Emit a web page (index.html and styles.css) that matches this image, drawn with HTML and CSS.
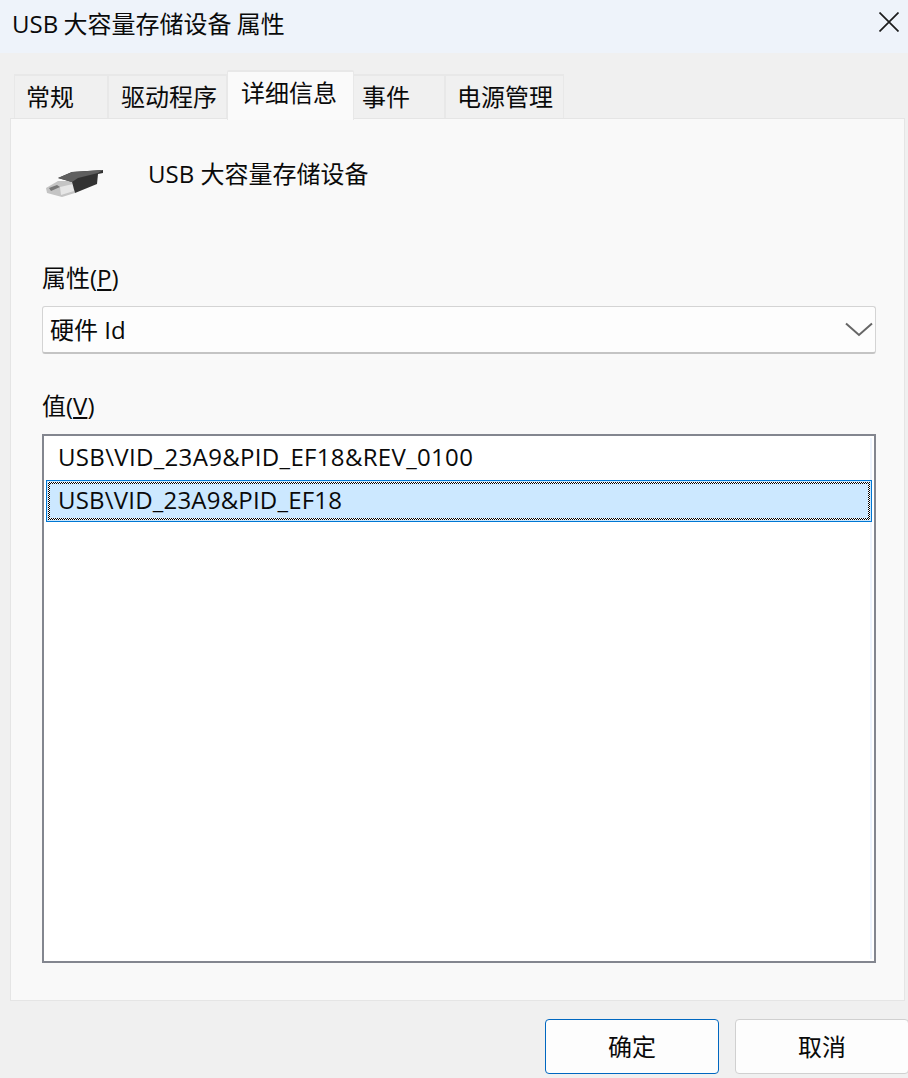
FILE: index.html
```html
<!DOCTYPE html>
<html lang="zh-CN">
<head>
<meta charset="utf-8">
<title>USB 大容量存储设备 属性</title>
<link rel="stylesheet" href="styles.css">
</head>
<body>
<div class="dialog">
  <header class="titlebar">
    <span class="title">USB 大容量存储设备 属性</span>
    <svg class="close" width="20" height="20" viewBox="0 0 20 20"><path d="M0.5 0.5 L19.5 19.5 M19.5 0.5 L0.5 19.5" stroke="#1c1c1c" stroke-width="1.7" fill="none"/></svg>
  </header>
  <nav class="tabs">
    <div class="tab tab-a">常规</div>
    <div class="tab tab-b">驱动程序</div>
    <div class="tab tab-c active">详细信息</div>
    <div class="tab tab-d">事件</div>
    <div class="tab tab-e">电源管理</div>
  </nav>
  <main class="panel">
    <div class="device">
      <svg class="usb" width="64" height="40" viewBox="0 0 64 40">
        <defs><filter id="soft"><feGaussianBlur stdDeviation="0.6"/></filter></defs>
        <g filter="url(#soft)">
          <path d="M4 30 L16 23 L30 23 L33 35 L20 39 L5 35 Z" fill="#c4c4c4"/>
          <path d="M19 37 L32 33 L31 26 L18 29 Z" fill="#e6e6e6"/>
          <path d="M7 30 L15 27 L18 29 L9 33 Z" fill="#777"/>
          <path d="M16 20 L30 14 L61 12 L61 15 L56 16 L55 26 L33 35 L30 24 Z" fill="#333"/>
          <path d="M16 20 L30 14 L61 12 L56 15 L36 20 L30 24 Z" fill="#5e5e5e"/>
        </g>
      </svg>
      <span class="device-name">USB 大容量存储设备</span>
    </div>
    <label class="field-label label-prop">属性(<u>P</u>)</label>
    <div class="select">
      <span>硬件 Id</span>
      <svg class="chevron" width="28" height="16" viewBox="0 0 28 16"><path d="M1 2.5 L14 14 L27 2.5" stroke="#666" stroke-width="2" fill="none"/></svg>
    </div>
    <label class="field-label label-val">值(<u>V</u>)</label>
    <div class="list">
      <div class="row">USB\VID_23A9&amp;PID_EF18&amp;REV_0100</div>
      <div class="row selected"><span class="focus">USB\VID_23A9&amp;PID_EF18</span></div>
    </div>
  </main>
  <footer class="buttons">
    <div class="btn default">确定</div>
    <div class="btn">取消</div>
  </footer>
</div>
</body>
</html>
```
FILE: styles.css
```css
* { box-sizing: border-box; }
html, body { margin: 0; padding: 0; height: 100%; overflow: hidden; }
body {
  font-family: "Open Sans", "Noto Sans CJK SC", sans-serif;
  font-size: 24px;
  color: #0a0a0a;
  background: #f0f0f0;
}
.dialog { width: 908px; height: 1078px; display: flex; flex-direction: column; overflow: hidden; }
.titlebar {
  height: 53px;
  background: #eef3fa;
  display: flex;
  align-items: center;
  justify-content: space-between;
  padding: 0 9px 6px 12px;
  flex: none;
}
.title { font-size: 24px; line-height: 30px; word-spacing: -1px; }
.close { display: block; margin-top: -3px; }
.tabs {
  display: flex;
  height: 48px;
  margin: 17px 0 0 14px;
  align-items: flex-end;
  position: relative;
  z-index: 2;
  flex: none;
}
.tab {
  height: 44px;
  background: #f0f0f0;
  border: 2px solid #e8e8e8;
  border-bottom: 0;
  border-left-width: 1px;
  border-right-width: 1px;
  line-height: 42px;
  padding-left: 11px;
  white-space: nowrap;
}
.tab-a { width: 94px; }
.tab-b { width: 119px; padding-left: 12px; }
.tab-c { width: 127px; padding-left: 13px; }
.tab-d { width: 91px; padding-left: 8px; border-left: 0; }
.tab-e { width: 119px; padding-left: 11px; }
.tab.active {
  height: 50px;
  margin-bottom: -2px;
  background: #fafafa;
  line-height: 42px;
  border-radius: 2px 2px 0 0;
}
.panel {
  width: 895px;
  height: 883px;
  margin-left: 10px;
  background: #f9f9f9;
  border: 1px solid #e5e5e5;
  padding: 0 28px 0 31px;
  flex: none;
}
.device { display: flex; align-items: flex-start; height: 129px; padding-top: 27px; }
.usb { display: block; margin: 12px 0 0 0; flex: none; }
.device-name { margin-left: 42px; line-height: 56px; margin-top: 0; }
.field-label { display: block; line-height: 32px; }
.label-prop { margin-top: 14px; }
.label-val { margin-top: 36px; }
.select {
  height: 48px;
  margin-top: 12px;
  background: #fdfdfd;
  border: 1px solid #d4d4d4;
  border-bottom: 2px solid #c4c4c4;
  border-radius: 3px;
  display: flex;
  align-items: center;
  justify-content: space-between;
  padding: 0 2px 3px 7px;
}
.chevron { margin-top: 2px; }
.list {
  height: 529px;
  margin-top: 12px;
  background: #fff;
  border: 2px solid #83868f;
  padding: 2px;
  position: relative;
}
.list::after {
  content: "";
  position: absolute;
  top: 2px;
  bottom: 2px;
  right: 2px;
  width: 2px;
  background: #eef5ff;
}
.row { height: 41px; line-height: 38px; padding-left: 12px; letter-spacing: 0.33px; }
.row.selected {
  width: 826px;
  height: 42px;
  background: #cce8ff;
  border: 1px solid #0078d4;
  padding: 1px;
  margin-top: 1px;
  position: relative;
  z-index: 1;
  letter-spacing: 0.2px;
}
.focus {
  display: block;
  height: 38px;
  line-height: 31px;
  padding-left: 8px;
  border: 2px solid transparent;
  background:
    linear-gradient(#cce8ff, #cce8ff) padding-box,
    repeating-conic-gradient(#000 0 25%, #fff 0 50%) border-box 0 0 / 2px 2px;
}
.buttons {
  display: flex;
  gap: 16px;
  margin: 18px 0 0 545px;
  flex: none;
}
.btn {
  width: 174px;
  height: 55px;
  background: #fdfdfd;
  border: 1px solid #d0d0d0;
  border-radius: 4px;
  text-align: center;
  line-height: 54px;
  flex: none;
}
.btn.default { border-color: #0067c0; }
```
